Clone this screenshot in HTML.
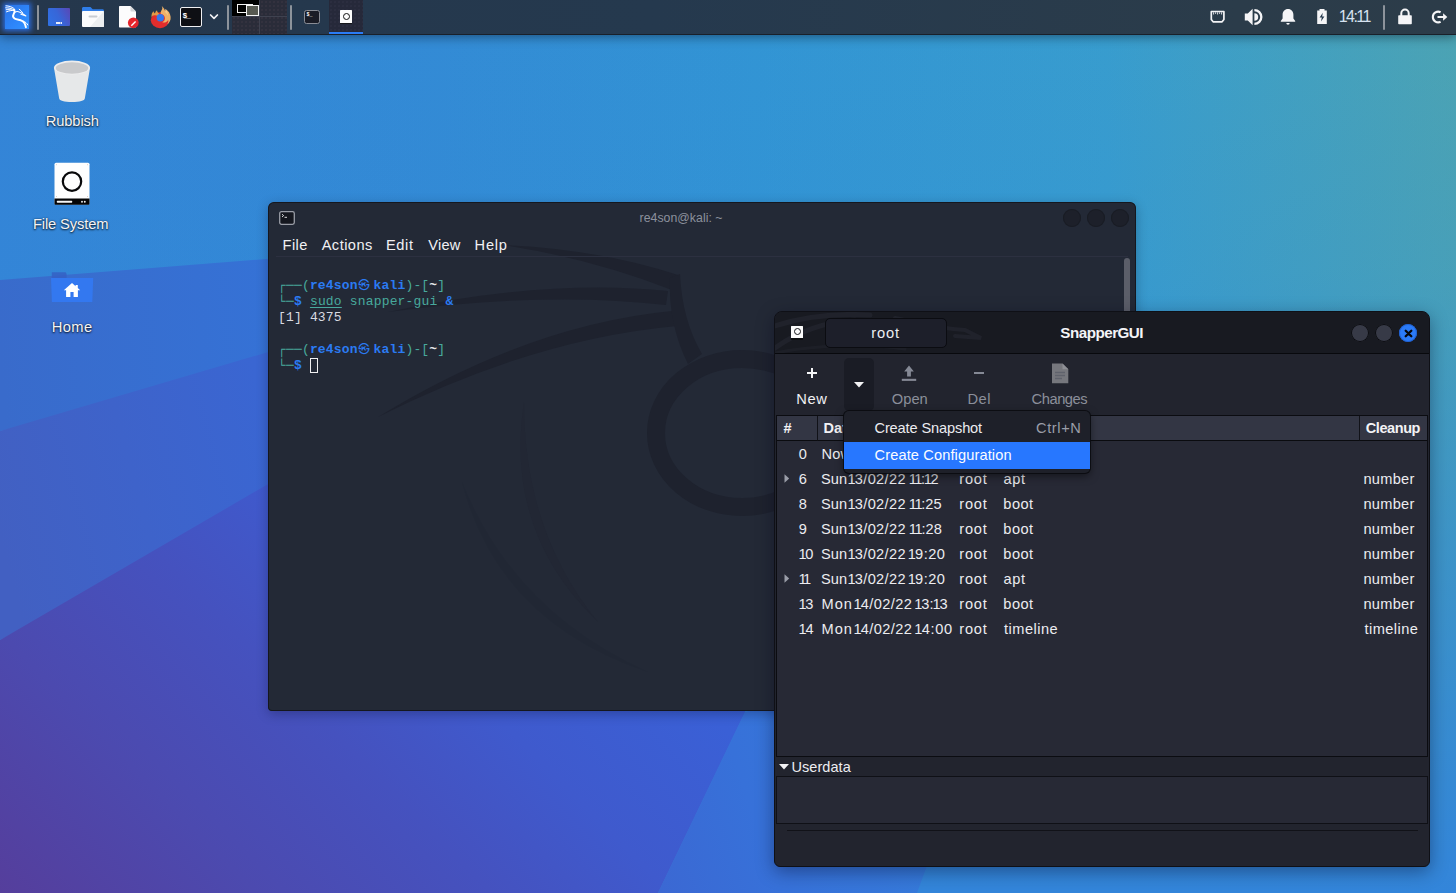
<!DOCTYPE html>
<html lang="en">
<head>
<meta charset="utf-8">
<title>Kali desktop - SnapperGUI</title>
<style>
*{box-sizing:border-box;margin:0;padding:0}
html,body{width:1456px;height:893px;overflow:hidden;background:#3a6fd0}
body{font-family:"Liberation Sans","DejaVu Sans",sans-serif;font-size:14.5px;color:#e9e9ee;position:relative}
.abs{position:absolute}
#wall{position:absolute;left:0;top:0;width:1456px;height:893px}
/* ---------- top panel ---------- */
#panel{position:absolute;left:0;top:0;width:1456px;height:35px;background:linear-gradient(90deg,#25374c 0%,#25394e 45%,#2b3c4a 85%,#2c3c49 100%);border-bottom:1px solid #1a2029;box-shadow:0 2px 10px rgba(0,0,10,.42)}
.psep{position:absolute;top:5px;width:2px;height:25px;background:#8d939b;border-radius:1px}
/* ---------- desktop icons ---------- */
.dlabel{position:absolute;text-align:center;white-space:nowrap;color:#f4f4f6;font-size:14.7px;text-shadow:0 1px 2px rgba(0,0,0,.8),0 0 2px rgba(0,0,0,.5)}
/* ---------- terminal ---------- */
#term{position:absolute;left:268px;top:202px;width:867.500px;height:509px;background:#232936;border-radius:6px 6px 4px 4px;box-shadow:0 3px 12px rgba(0,0,30,.28);overflow:hidden}
#term:after{content:"";position:absolute;left:0;top:0;right:0;bottom:0;border-radius:6px 6px 4px 4px;box-shadow:inset 0 0 0 1px #15171e;pointer-events:none}
#term .title{position:absolute;top:1px;height:30px;white-space:nowrap;line-height:30px;font-size:12.3px;color:#8c919d}
#term .menu span{position:absolute;top:35px;line-height:16px;font-size:14.6px;color:#f1f1f4}
.wbtn{position:absolute;width:18px;height:18px;border-radius:50%}
#term .wbtn{background:#1d202a;box-shadow:inset 0 0 0 1px #191c24}
.k{display:inline-block;width:15.8px;font-style:normal;text-align:left;font-size:11.5px;vertical-align:top;position:relative;top:0;left:.5px;font-weight:normal;font-family:"Liberation Mono","Noto Sans CJK JP",monospace}
.mono{font-family:"Liberation Mono","DejaVu Sans Mono",monospace;font-size:13px;line-height:16px;white-space:pre;position:absolute;left:10px;letter-spacing:.17px}
/* ---------- snapper ---------- */
#snap{position:absolute;left:774px;top:311px;width:656px;height:556px;background:#22242e;border:1px solid #0f1016;border-radius:8px 8px 6px 6px;box-shadow:0 5px 18px rgba(0,0,25,.38);overflow:hidden}
#snap .hb{position:absolute;left:0;top:0;width:100%;height:42px;background:#181a21;border-bottom:1px solid #08090d}
#snap .tb{position:absolute;left:0;top:42px;width:100%;height:62px;background:#22242e}
.tlabel{position:absolute;font-size:14.7px;white-space:nowrap;line-height:16px}
.gray{color:#8b8f9a}
#tree{position:absolute;left:1px;top:103px;width:652px;height:342px;overflow:hidden;background:#272935;border:1px solid #0b0c11}
#tree .hd span{position:absolute;top:0}
#tree .hd{position:absolute;left:0;top:0;height:25px;background:#333644;border-right:1px solid #111218;border-bottom:1px solid #0a0b0f;font-weight:bold;font-size:14.5px;line-height:24px;color:#f2f2f5;white-space:nowrap;overflow:hidden}
.row{position:absolute;left:0;width:100%;height:25px;line-height:25px;font-size:14.6px;color:#ececf0;white-space:nowrap}
.row span{position:absolute;top:.8px}
.row i{font-style:normal;margin:0 -1.2px}
#menu{position:absolute;left:844px;top:411px;width:245.500px;height:62px;background:#1e2029;border-radius:5px;box-shadow:0 0 0 1px rgba(10,11,16,.9),0 3px 8px rgba(0,0,0,.5)}
#menu .it{position:absolute;left:0;width:245.500px;height:27px;line-height:27px;font-size:14.6px;white-space:nowrap}
</style>
</head>
<body>
<svg id="wall" viewBox="0 0 1456 893" preserveAspectRatio="none">
<defs>
<linearGradient id="gh" x1="0" y1="0" x2="1" y2="0">
<stop offset="0" stop-color="#3485d7"/><stop offset=".3" stop-color="#338bd5"/><stop offset=".52" stop-color="#3295d4"/><stop offset=".76" stop-color="#389dce"/><stop offset="1" stop-color="#4ca4b3"/>
</linearGradient>
<linearGradient id="gv" x1="0" y1="0" x2="0" y2="1">
<stop offset="0" stop-color="#2f7ed6" stop-opacity="0"/><stop offset=".3" stop-color="#2f86d8" stop-opacity=".15"/><stop offset="1" stop-color="#3385da" stop-opacity="1"/>
</linearGradient>
<linearGradient id="ga" gradientUnits="userSpaceOnUse" x1="0" y1="350" x2="700" y2="300">
<stop offset="0" stop-color="#396bcb"/><stop offset=".4" stop-color="#3572d6"/><stop offset="1" stop-color="#3378d8"/>
</linearGradient>
<linearGradient id="gb" gradientUnits="userSpaceOnUse" x1="0" y1="540" x2="700" y2="350">
<stop offset="0" stop-color="#4260c2"/><stop offset=".4" stop-color="#3a66d2"/><stop offset="1" stop-color="#3570d8"/>
</linearGradient>
<linearGradient id="gc" gradientUnits="userSpaceOnUse" x1="0" y1="893" x2="500" y2="400">
<stop offset="0" stop-color="#553e9c"/><stop offset=".26" stop-color="#4c4aaf"/><stop offset=".5" stop-color="#4552bf"/><stop offset=".68" stop-color="#3f5acd"/><stop offset=".9" stop-color="#3a60d6"/><stop offset="1" stop-color="#3863d8"/>
</linearGradient>
<linearGradient id="gw" gradientUnits="userSpaceOnUse" x1="660" y1="893" x2="930" y2="800"><stop offset="0" stop-color="#3b68d3"/><stop offset=".4" stop-color="#3771d9"/><stop offset="1" stop-color="#357bda"/></linearGradient>
</defs>
<rect width="1456" height="893" fill="url(#gh)"/>
<rect width="1456" height="893" fill="url(#gv)"/>
<polygon points="0,280 720,223 720,270 0,431" fill="url(#ga)"/>
<polygon points="0,431 720,219 720,260 0,640" fill="url(#gb)"/>
<polygon points="745,712 658,893 917,893 1010,640" fill="url(#gw)"/>
<polygon points="0,640 722,220 830,536 745,712 658,893 0,893" fill="url(#gc)"/>
</svg>

<div id="panel">
<!-- kali menu -->
<div class="abs" style="left:5px;top:5px;width:24px;height:24px;background:linear-gradient(135deg,#2a72e6 0%,#2e86fa 60%,#3393ff 100%);box-shadow:0 0 5px 2px rgba(45,120,255,.8)">
<svg width="24" height="24" viewBox="0 0 24 24" style="position:absolute;left:0;top:0">
<g fill="none" stroke="#fff" stroke-linecap="round" stroke-linejoin="round">
<path d="M1 .8c3 .2 5.600 1 7.600 2.400M.7 2.800c3 0 5.800.6 8 1.800M1.200 4.700c2.600-.3 5.200.1 7.600.9M1.500 6.800c2.600-1 5-1.500 7.600-1.500" stroke-width="1"/>
<path d="M9.300 4.600c.8 1.600.2 3-.6 4.400-1 1.700-.8 3.400.8 4.500 1.500 1 3.600 1.100 5.500 1.500 2.200.5 3.700 1.600 4.600 3.400.6 1.200 1 2.500 1.300 3.800" stroke-width="1.900"/>
<path d="M9.800 7.300c1.300-.9 2.900-1 4.500-.4 2.300.8 4.600 2.200 6.600 4-1.800-.7-3.400-1.300-5-1.700" stroke-width="1.100"/>
<path d="M14.200 4.200c1.300.9 2.500 2.100 3.400 3.500" stroke-width="1"/>
<path d="M18.600 16.300c1.800.6 3.200 1.800 4.200 3.600" stroke-width="1"/>
</g>
</svg></div>
<div class="psep" style="left:37px"></div>
<!-- show desktop -->
<div class="abs" style="left:48px;top:8px;width:22px;height:18px;border-radius:1px;background:linear-gradient(62deg,#2f72e6 0%,#3766d8 50%,#5a47b6 100%)"><i class="abs" style="left:8px;top:14px;width:6px;height:1.600px;background:repeating-linear-gradient(90deg,#e8ecf8 0 1.500px,rgba(220,225,245,.55) 1.500px 2.250px);display:block"></i></div>
<!-- file manager -->
<svg class="abs" style="left:81px;top:6px" width="24" height="22" viewBox="0 0 24 22"><path d="M1 2.500c0-.9.600-1.500 1.500-1.500h7l2.200 2.200h9.800c.9 0 1.500.6 1.500 1.500v3H1z" fill="#2f7de8"/><rect x="1" y="5" width="22" height="16" rx="1" fill="#fbfbfc"/><path d="M23 5v15c0 .6-.4 1-1 1H9z" fill="#eceef0"/><rect x="7.500" y="9.500" width="9" height="2" rx="1" fill="#c8ccd2"/></svg>
<!-- text editor -->
<svg class="abs" style="left:118px;top:5px" width="22" height="24" viewBox="0 0 22 24"><path d="M1 2c0-.6.400-1 1-1h10.500l5.500 5.500v15c0 .6-.4 1-1 1h-15c-.6 0-1-.4-1-1z" fill="#fcfcfd"/><path d="M12.500 1l5.500 5.500h-4.500c-.6 0-1-.4-1-1z" fill="#d4d6da"/><circle cx="15.300" cy="17.800" r="5.400" fill="#e5252c"/><path d="M12.800 20.300l4.300-4.300 1 1-4.300 4.300z" fill="#fff"/></svg>
<!-- firefox -->
<svg class="abs" style="left:149px;top:5px" width="24" height="25" viewBox="0 0 24 25"><ellipse cx="11" cy="15.200" rx="9.200" ry="8" fill="#e22d2d"/><path d="M2.600 10c.2-1.500.9-2.800 1.900-3.700.2 1 .7 1.700 1.400 2.100.4-1.400 1.100-2.400 2.100-3.100.1 1.500.9 2.700 2.300 3.400L9 11.400c-1.900-1.400-4.100-1.500-6.600.5 0-.7.100-1.300.2-1.900z" fill="#e39a48"/><path d="M12.600 1c1 1.300 1 2.700.1 4-.9 1.300-1.300 2.500-.8 3.900 2.500.4 4 2.100 4 4.300 0 1.800-.9 3.200-2.600 4 1.300.5 2.700.4 3.900-.2 1-.5 1.700-1.300 2-2.300.4 1.900-.2 3.600-1.500 5 2.800-1.700 4.300-4.700 3.900-8-.4-3.300-2.100-5.900-4.700-7.500.2 1 0 1.800-.5 2.500C15.700 4.300 14.400 2.300 12.600 1z" fill="#efb066"/><path d="M15.600 3.600c.8 1.100.9 2.200.4 3.300 1.300 1 2.200 2.300 2.700 3.900.7-2.700-.6-5.500-3.100-7.200z" fill="#f6c789"/><circle cx="11.300" cy="12.700" r="3.700" fill="#3377ee"/></svg>
<!-- terminal launcher -->
<div class="abs" style="left:180px;top:7px;width:22px;height:20px;background:#0e0f14;border:1.500px solid #f0f0f2;border-radius:2px"><span class="abs" style="left:1.500px;top:2.500px;font:bold 8px/9px 'Liberation Mono',monospace;color:#fff;letter-spacing:-1.300px">$_</span></div>
<svg class="abs" style="left:209px;top:13px" width="10" height="8" viewBox="0 0 10 8"><path d="M1.600 2L5 5.400 8.400 2" stroke="#f2f2f4" stroke-width="1.700" fill="none" stroke-linecap="round" stroke-linejoin="round"/></svg>
<div class="psep" style="left:227px"></div>
<!-- workspace switcher -->
<div class="abs" style="left:232px;top:0;width:55px;height:34px;background:#2a2c39;background-image:radial-gradient(rgba(150,110,120,.28) .5px,transparent .8px);background-size:4px 4px">
<div class="abs" style="left:0;top:0;width:27px;height:16px;background:#000"></div>
<div class="abs" style="left:27px;top:0;width:1px;height:34px;background:#3f4250"></div>
<div class="abs" style="left:0;top:16px;width:55px;height:1px;background:#3f4250"></div>
<div class="abs" style="left:5px;top:4px;width:16px;height:9px;border:1px solid #f4f4f4;background:#000"></div>
<div class="abs" style="left:14px;top:5px;width:13px;height:11px;border:1px solid #f4f4f4;background:#575951"></div>
</div>
<div class="psep" style="left:290px"></div>
<!-- task buttons -->
<div class="abs" style="left:304px;top:10px;width:16px;height:14px;background:#1a1c26;border:1.500px solid #8a8d96;border-radius:2.500px"><span class="abs" style="left:1.500px;top:.5px;font:bold 5px/6px 'Liberation Mono',monospace;color:#fff">$_</span></div>
<div class="abs" style="left:329px;top:0;width:34px;height:34px;background:#26293a;background-image:radial-gradient(rgba(120,110,140,.22) .5px,transparent .8px);background-size:4px 4px;border-bottom:2px solid #2b7cf6">
<div class="abs" style="left:11px;top:10px;width:12px;height:13.500px;background:#fcfcfc;border-bottom:1.500px solid #15161a;border-radius:.5px"><i class="abs" style="display:block;left:2.500px;top:2.500px;width:7px;height:7px;border:1.600px solid #111;border-radius:50%"></i></div>
</div>
<!-- right side -->
<svg class="abs" style="left:1209px;top:10px" width="17" height="14" viewBox="0 0 17 14"><path d="M2.300 1.500h12.600v8l-1.800 2.300H4.100L2.300 9.500z" fill="none" stroke="#f3f3f5" stroke-width="1.700" stroke-linejoin="round"/><path d="M4.600 2.300v2.200M6.600 2.300v1.600M8.600 2.300v2.200M10.600 2.300v1.600M12.600 2.300v2.200" stroke="#f3f3f5" stroke-width=".9"/></svg>
<svg class="abs" style="left:1244px;top:8px" width="19" height="18" viewBox="0 0 19 18"><path d="M.8 5.600h3L8.600 .8v16.400L3.800 12.400H.8z" fill="#f5f5f7"/><path d="M10.400 .9a8.100 8.100 0 010 16.200v-2.300a5.800 5.800 0 000-11.600z" fill="#f5f5f7"/><path d="M10.400 5.200a3.800 3.800 0 010 7.600z" fill="#f5f5f7"/></svg>
<svg class="abs" style="left:1280px;top:8px" width="16" height="17" viewBox="0 0 16 17"><path d="M8 1c3.300 0 5.400 2.500 5.400 5.800v3.800l1.800 2.400v.8H.8V13l1.800-2.400V6.800C2.600 3.500 4.700 1 8 1z" fill="#f5f5f7"/><path d="M6.300 15h3.400a1.700 1.700 0 01-3.400 0z" fill="#f5f5f7"/></svg>
<svg class="abs" style="left:1316px;top:8px" width="12" height="17" viewBox="0 0 12 17"><path d="M3.500 1h5v1.500h2.300v13.500H1.200V2.500h2.300z" fill="#f5f5f7"/><path d="M6.800 4.800L3.600 9.600h2.200l-.8 3.800 3.400-5H6.200z" fill="#25394d"/></svg>
<div class="abs" id="fClk" style="left:1338.73px;letter-spacing:-1.563px;top:8px;font-size:16px;line-height:18px;color:#d6e2f0;white-space:nowrap">14:11</div>
<div class="psep" style="left:1383px"></div>
<svg class="abs" style="left:1397px;top:8px" width="16" height="17" viewBox="0 0 16 17"><path d="M4.300 8V5.200a3.700 3.700 0 017.400 0V8" fill="none" stroke="#f5f5f7" stroke-width="2"/><rect x="1.200" y="7.300" width="13.600" height="9" rx=".8" fill="#f5f5f7"/></svg>
<svg class="abs" style="left:1431px;top:10px" width="17" height="14" viewBox="0 0 17 14"><path d="M9.600 2.300A5.300 5.300 0 1 0 9.600 11.700" fill="none" stroke="#f5f5f7" stroke-width="2.100"/><path d="M6.500 6h5.600V3.300L16.300 7l-4.200 3.700V8H6.500z" fill="#f5f5f7"/></svg>
</div>

<!-- desktop icons -->
<svg class="abs" style="left:52px;top:59px" width="40" height="44" viewBox="0 0 40 44"><path d="M2 9l5.200 30.500c.3 2 4.800 3.500 12.800 3.500s12.500-1.500 12.800-3.500L38 9z" fill="#e6e8e9"/><ellipse cx="20" cy="8.600" rx="18" ry="7" fill="#ededee"/><ellipse cx="20" cy="9" rx="16.300" ry="5.700" fill="#c9cacc"/></svg>
<div class="dlabel" id="fL1" style="left:45.69px;letter-spacing:-0.104px;top:113px;line-height:17px">Rubbish</div>
<svg class="abs" style="left:54px;top:162px" width="36" height="44" viewBox="0 0 36 44"><rect x=".5" y=".8" width="35" height="41.800" rx="1.500" fill="#fefefe"/><path d="M.5 36.400h35v5c0 .8-.6 1.400-1.400 1.400H1.900c-.8 0-1.400-.6-1.400-1.400z" fill="#050506"/><rect x="2.800" y="38.700" width="15.400" height="2" rx=".6" fill="#f6f6f6"/><circle cx="28" cy="39.800" r=".95" fill="#f2f2f2"/><circle cx="30.800" cy="39.800" r=".95" fill="#f2f2f2"/><circle cx="18" cy="19.600" r="9.200" fill="none" stroke="#08080a" stroke-width="2.200"/><circle cx="2.400" cy="2.800" r=".45" fill="#c8a890"/><circle cx="33.600" cy="2.800" r=".45" fill="#c8a890"/><circle cx="2.400" cy="34.500" r=".45" fill="#c8a890"/><circle cx="33.600" cy="34.500" r=".45" fill="#c8a890"/></svg>
<div class="dlabel" id="fL2" style="left:32.92px;letter-spacing:-0.106px;top:216px;line-height:17px">File System</div>
<svg class="abs" style="left:51px;top:271px" width="43" height="32" viewBox="0 0 43 32"><path d="M.8 1.200h13.800l1 1.800V8H.8z" fill="#3560c4" opacity=".85"/><path d="M0 7h42.200l-.9 24H.9z" fill="#3378f0"/><path d="M21 12L12.800 19.200h2.300v6.700h4.300v-4.800h3.200v4.800h4.300v-6.700H29.200l-2.400-2.100v-3h-2.200v1.100z" fill="#fff"/></svg>
<div class="dlabel" id="fL3" style="left:51.73px;letter-spacing:0.400px;top:319px;line-height:17px">Home</div>

<div id="term">
<svg class="abs" style="left:0;top:0" width="868" height="510" viewBox="0 0 868 510" fill="#1e222e">
<path d="M236 43Q330 47 410 73L404 88Q325 57 236 43Z"/>
<path d="M120 110Q280 76 400 89L398 103Q280 89 120 110Z"/>
<path d="M110 215Q260 123 404 109L409 124Q265 137 110 215Z"/>
<path d="M402 76L412 72Q414 118 434 152L420 162Q400 122 402 76Z"/>
<ellipse cx="474" cy="231" rx="86" ry="74" fill="none" stroke="#1e222e" stroke-width="18"/>
<path d="M256 200Q236 330 330 420Q256 330 256 200Z" opacity=".22"/>
<path d="M194 280Q230 420 380 470Q246 410 194 280Z" opacity=".15"/>
</svg>
<svg class="abs" style="left:11px;top:9px" width="16" height="14" viewBox="0 0 16 14"><rect x=".7" y=".7" width="14.600" height="12.600" rx="1.800" fill="#15171f" stroke="#9a9da6" stroke-width="1.300"/><path d="M3 3.200l1.600 1.400L3 6M5.500 6.300h2.500" stroke="#f0f0f0" stroke-width=".9" fill="none"/></svg>
<div class="title" id="fTt" style="left:371.62px;letter-spacing:0.023px;">re4son@kali: ~</div>
<div class="wbtn" style="left:795px;top:7px"></div><div class="wbtn" style="left:819px;top:7px"></div><div class="wbtn" style="left:843px;top:7px"></div>
<div class="menu"><span id="fM1" style="left:14.50px;letter-spacing:0.473px;">File</span><span id="fM2" style="left:53.68px;letter-spacing:0.463px;">Actions</span><span id="fM3" style="left:117.92px;letter-spacing:0.669px;">Edit</span><span id="fM4" style="left:160.34px;letter-spacing:0.199px;">View</span><span id="fM5" style="left:206.58px;letter-spacing:0.783px;">Help</span></div>
<div class="abs" style="left:8px;top:54px;width:852px;height:1px;background:#2c3040"></div>
<div class="abs" style="left:856px;top:56px;width:6px;height:60px;background:#5b5e69;border-radius:3px"></div>
<div class="mono" style="top:76px;color:#48a99d">┌──(<b style="color:#2b7bf3">re4son<i class="k">㉿</i>kali</b>)-[<b style="color:#e6e6ea">~</b>]</div>
<div class="mono" style="top:92px;color:#48a99d">└─<b style="color:#2b7bf3">$</b> <u style="color:#48a99d;text-underline-offset:2px">sudo</u> <span style="color:#48a99d">snapper-gui</span> <b style="color:#2b7bf3">&amp;</b></div>
<div class="mono" style="top:108px;color:#d9dbe2">[1] 4375</div>
<div class="mono" style="top:140px;color:#48a99d">┌──(<b style="color:#2b7bf3">re4son<i class="k">㉿</i>kali</b>)-[<b style="color:#e6e6ea">~</b>]</div>
<div class="mono" style="top:156px;color:#48a99d">└─<b style="color:#2b7bf3">$</b> </div>
<div class="abs" style="left:41.500px;top:156px;width:8px;height:15px;border:1px solid #f0f0f2"></div>
</div>

<div id="snap">
<div class="hb">
<svg class="abs" style="left:0;top:0" width="230" height="41" viewBox="0 0 230 41" fill="none" stroke="#20222b" stroke-linecap="round"><path d="M0 14C30 4 60 1 95 3" stroke-width="5"/><path d="M0 36C25 18 50 10 80 8" stroke-width="5"/><path d="M120 6c20 4 40 10 70 12l16 8-26-2" stroke-width="4"/><path d="M0 41c40-8 90-10 130-4" stroke-width="3" opacity=".7"/></svg>
<div class="abs" style="left:16px;top:13.500px;width:12px;height:14.500px;background:#fbfbfb;border-bottom:2px solid #0c0d10;border-radius:.5px"><i class="abs" style="display:block;left:2.500px;top:2.800px;width:7px;height:7px;border:1.200px solid #15161a;border-radius:50%"></i></div>
<div class="abs" style="left:50px;top:6px;width:122px;height:30px;background:#1d1f2a;border:1px solid #0b0c11;border-radius:5px"></div><div class="abs" id="fRt" style="left:96.30px;letter-spacing:0.840px;top:7px;line-height:28px;font-size:14.700px;color:#eeeef2;white-space:nowrap">root</div>
<div class="abs" id="fSt" style="left:285.34px;letter-spacing:-0.509px;top:11.500px;line-height:18px;font-size:15.200px;font-weight:bold;color:#f4f4f7;white-space:nowrap">SnapperGUI</div>
<div class="wbtn" style="left:576px;top:12px;background:#373a47;box-shadow:inset 0 0 0 1px #0c0d11"></div>
<div class="wbtn" style="left:600px;top:12px;background:#373a47;box-shadow:inset 0 0 0 1px #0c0d11"></div>
<div class="wbtn" style="left:624px;top:12px;background:#2b7bf8;box-shadow:inset 0 0 0 1px #1f5fd0"><svg class="abs" style="left:4.500px;top:4.500px" width="9" height="9" viewBox="0 0 9 9"><path d="M1.700 1.700l5.600 5.600M7.300 1.700L1.700 7.300" stroke="#06070b" stroke-width="2.300" stroke-linecap="round"/></svg></div>
</div>
<div class="tb">
<svg class="abs" style="left:30.800px;top:13.300px" width="12" height="12" viewBox="0 0 12 12"><path d="M6 1v10M1 6h10" stroke="#f5f5f7" stroke-width="2"/></svg>
<div class="tlabel" id="fN" style="left:21.27px;letter-spacing:0.590px;top:36.500px;color:#f1f1f4">New</div>
<div class="abs" style="left:69px;top:4px;width:30px;height:53px;background:#1a1c25;border-radius:5px"></div>
<svg class="abs" style="left:79px;top:27.500px" width="10" height="6" viewBox="0 0 10 6"><path d="M0 0h10L5 5.600z" fill="#f3f3f5"/></svg>
<svg class="abs" style="left:126px;top:11px" width="16" height="17" viewBox="0 0 16 17"><path d="M8 .6L3.200 6.400h2.900v5h3.800v-5h2.900z" fill="#858995"/><rect x=".8" y="13.800" width="14.400" height="2.100" fill="#858995"/></svg>
<div class="tlabel gray" id="fO" style="left:116.69px;letter-spacing:0.058px;top:36.500px">Open</div>
<div class="abs" style="left:199px;top:17.800px;width:10px;height:2px;background:#858995"></div>
<div class="tlabel gray" id="fD" style="left:192.56px;letter-spacing:0.445px;top:36.500px">Del</div>
<svg class="abs" style="left:276px;top:9px" width="18" height="21" viewBox="0 0 18 21"><path d="M1 .4h10.500L17.300 6.200V20.300H1z" fill="#76777d"/><path d="M11.500 .4v5.800h5.800z" fill="#8e8f95"/><path d="M4 9.500h10M4 12.500h10M4 15.500h7" stroke="#5f626c" stroke-width="1.300"/></svg>
<div class="tlabel gray" id="fC" style="left:256.58px;letter-spacing:-0.462px;top:36.500px">Changes</div>
</div>
<div id="tree">
<div class="hd" style="left:0;width:41px"><span id="fH0" style="left:6.54px;letter-spacing:0px;">#</span></div>
<div class="hd" style="left:41px;width:140px"><span id="fH1" style="left:5.38px;letter-spacing:0.212px;">Date</span></div>
<div class="hd" style="left:181px;width:44px"><span style="left:6.500px">User</span></div>
<div class="hd" style="left:225px;width:358px"><span style="left:6.500px">Description</span></div>
<div class="hd" style="left:583px;width:68px;border-right:none"><span id="fH4" style="left:5.72px;letter-spacing:-0.409px;">Cleanup</span></div>
<div class="row" style="top:25px"><span id="fr0n" style="left:21.71px;letter-spacing:0px;">0</span><span id="fr0a" style="left:44.50px;letter-spacing:0.229px;">Now</span></div>
<div class="row" style="top:50px"><svg class="abs" style="left:7.400px;top:8px" width="6" height="9" viewBox="0 0 6 9"><path d="M.5 .3L5.200 4.500.5 8.700z" fill="#9a9da8"/></svg><span id="fr1n" style="left:21.80px;letter-spacing:0px;">6</span><span id="fr1a" style="left:43.89px;letter-spacing:0.116px;">Sun</span><span id="fr1b" style="left:71.67px;letter-spacing:0.354px;"><i>1</i>3/02/22</span><span id="fr1c" style="left:132.92px;letter-spacing:-0.196px;"><i>1</i><i>1</i>:<i>1</i>2</span><span id="fr1u" style="left:182.36px;letter-spacing:0.750px;">root</span><span id="fr1d" style="left:226.58px;letter-spacing:0.630px;">apt</span><span id="fr1k" style="left:586.47px;letter-spacing:0.257px;">number</span></div>
<div class="row" style="top:75px"><span id="fr2n" style="left:21.82px;letter-spacing:0px;">8</span><span id="fr2a" style="left:43.89px;letter-spacing:0.116px;">Sun</span><span id="fr2b" style="left:71.67px;letter-spacing:0.354px;"><i>1</i>3/02/22</span><span id="fr2c" style="left:132.92px;letter-spacing:-0.041px;"><i>1</i><i>1</i>:25</span><span id="fr2u" style="left:182.36px;letter-spacing:0.750px;">root</span><span id="fr2d" style="left:226.34px;letter-spacing:0.474px;">boot</span><span id="fr2k" style="left:586.47px;letter-spacing:0.257px;">number</span></div>
<div class="row" style="top:100px"><span id="fr3n" style="left:21.69px;letter-spacing:0px;">9</span><span id="fr3a" style="left:43.89px;letter-spacing:0.116px;">Sun</span><span id="fr3b" style="left:71.67px;letter-spacing:0.354px;"><i>1</i>3/02/22</span><span id="fr3c" style="left:132.92px;letter-spacing:0.026px;"><i>1</i><i>1</i>:28</span><span id="fr3u" style="left:182.36px;letter-spacing:0.750px;">root</span><span id="fr3d" style="left:226.34px;letter-spacing:0.474px;">boot</span><span id="fr3k" style="left:586.47px;letter-spacing:0.257px;">number</span></div>
<div class="row" style="top:125px"><span id="fr4n" style="left:22.60px;letter-spacing:-0.083px;"><i>1</i>0</span><span id="fr4a" style="left:43.89px;letter-spacing:0.116px;">Sun</span><span id="fr4b" style="left:71.67px;letter-spacing:0.354px;"><i>1</i>3/02/22</span><span id="fr4c" style="left:131.88px;letter-spacing:0.487px;"><i>1</i>9:20</span><span id="fr4u" style="left:182.36px;letter-spacing:0.750px;">root</span><span id="fr4d" style="left:226.34px;letter-spacing:0.474px;">boot</span><span id="fr4k" style="left:586.47px;letter-spacing:0.257px;">number</span></div>
<div class="row" style="top:150px"><svg class="abs" style="left:7.400px;top:8px" width="6" height="9" viewBox="0 0 6 9"><path d="M.5 .3L5.200 4.500.5 8.700z" fill="#9a9da8"/></svg><span id="fr5n" style="left:22.67px;letter-spacing:-1.133px;"><i>1</i><i>1</i></span><span id="fr5a" style="left:43.89px;letter-spacing:0.116px;">Sun</span><span id="fr5b" style="left:71.67px;letter-spacing:0.354px;"><i>1</i>3/02/22</span><span id="fr5c" style="left:131.88px;letter-spacing:0.487px;"><i>1</i>9:20</span><span id="fr5u" style="left:182.36px;letter-spacing:0.750px;">root</span><span id="fr5d" style="left:226.58px;letter-spacing:0.630px;">apt</span><span id="fr5k" style="left:586.47px;letter-spacing:0.257px;">number</span></div>
<div class="row" style="top:175px"><span id="fr6n" style="left:22.67px;letter-spacing:-0.070px;"><i>1</i>3</span><span id="fr6a" style="left:44.50px;letter-spacing:1.044px;">Mon</span><span id="fr6b" style="left:77.60px;letter-spacing:0.391px;"><i>1</i>4/02/22</span><span id="fr6c" style="left:138.46px;letter-spacing:0.090px;"><i>1</i>3:<i>1</i>3</span><span id="fr6u" style="left:182.36px;letter-spacing:0.750px;">root</span><span id="fr6d" style="left:226.34px;letter-spacing:0.474px;">boot</span><span id="fr6k" style="left:586.47px;letter-spacing:0.257px;">number</span></div>
<div class="row" style="top:200px"><span id="fr7n" style="left:22.67px;letter-spacing:0.102px;"><i>1</i>4</span><span id="fr7a" style="left:44.50px;letter-spacing:1.044px;">Mon</span><span id="fr7b" style="left:77.60px;letter-spacing:0.391px;"><i>1</i>4/02/22</span><span id="fr7c" style="left:138.46px;letter-spacing:0.632px;"><i>1</i>4:00</span><span id="fr7u" style="left:182.36px;letter-spacing:0.750px;">root</span><span id="fr7d" style="left:227.01px;letter-spacing:0.477px;">timeline</span><span id="fr7k" style="left:587.52px;letter-spacing:0.435px;">timeline</span></div>
</div>
<svg class="abs" style="left:4px;top:451.500px" width="10" height="6" viewBox="0 0 10 6"><path d="M0 0h10L5 5.500z" fill="#f3f3f5"/></svg>
<div class="abs" id="fU" style="left:16.39px;letter-spacing:0.082px;top:446.800px;font-size:14.500px;line-height:17px;color:#ededf1;white-space:nowrap">Userdata</div>
<div class="abs" style="left:1px;top:464px;width:652px;height:48px;background:#272935;border:1px solid #0f1016"></div>
<div class="abs" style="left:12px;top:517.500px;width:631px;height:1px;background:#111218"></div>
</div>
<div id="menu">
<div class="it" style="top:4px;color:#ececf0"><span class="abs" id="fP1" style="left:30.49px;letter-spacing:-0.133px;">Create Snapshot</span><span class="abs" id="fP2" style="left:192.02px;letter-spacing:0.617px;color:#9a9da8">Ctrl+N</span></div>
<div class="it" style="top:31px;background:#2777ff;color:#fbfcff"><span class="abs" id="fP3" style="left:30.49px;letter-spacing:0.129px;">Create Configuration</span></div>
</div>
</body>
</html>
